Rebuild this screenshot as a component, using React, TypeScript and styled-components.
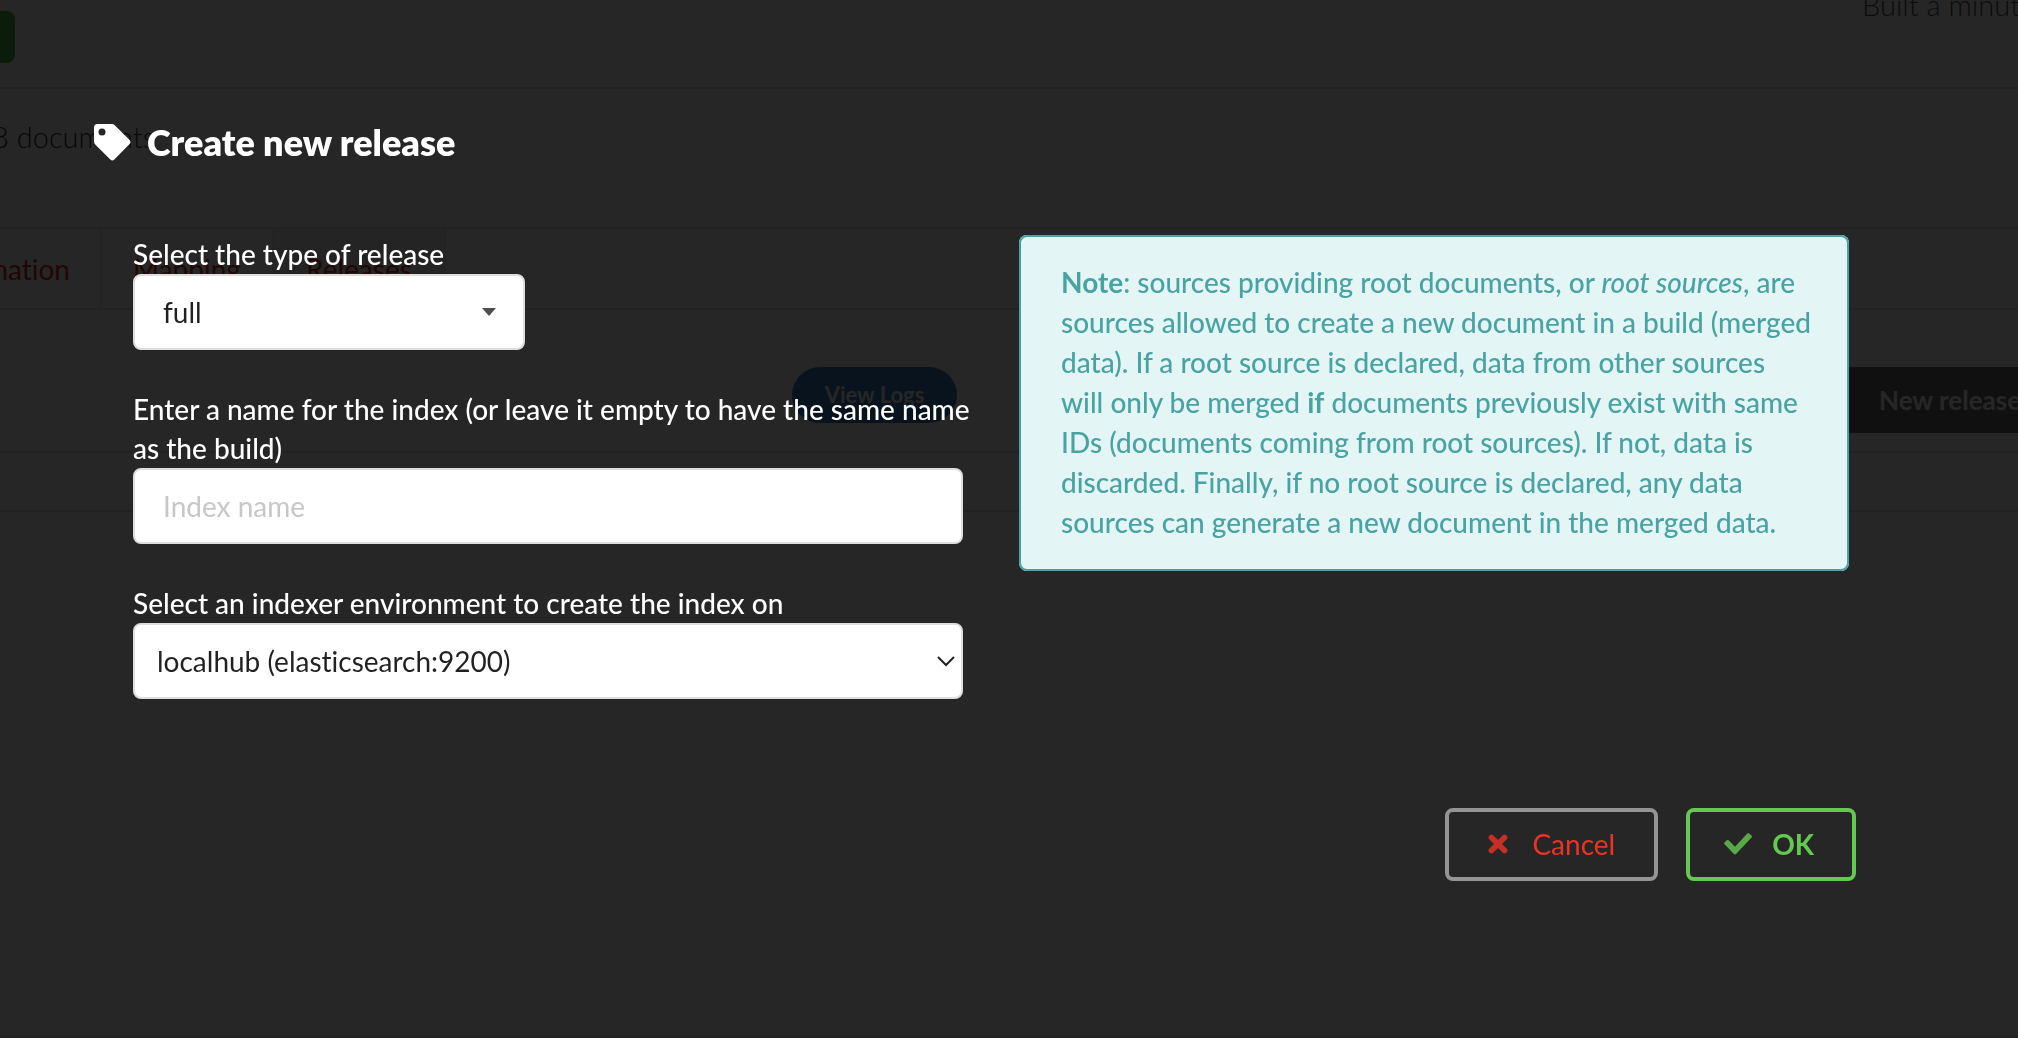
import React from 'react';
import styled, { createGlobalStyle, css } from 'styled-components';

const Global = createGlobalStyle`
  *, *::before, *::after { box-sizing: border-box; }
  html, body { margin: 0; background: #fff; }
  body {
    overflow: hidden;
    font-family: Lato, "Open Sans", sans-serif;
    font-size: 28px;
    line-height: 40px;
    font-variant-ligatures: none;
    color: rgba(0, 0, 0, 0.87);
  }
  button, input, select { font: inherit; font-variant-ligatures: none; }
`;

/* ---------- build page, seen through the dimmer ---------- */

const Page = styled.div`
  display: flex;
  flex-direction: column;
  min-height: 100vh;
  overflow: hidden;
`;

const BuildBar = styled.header`
  display: flex;
  justify-content: space-between;
  align-items: flex-start;
  height: 89px;
  border-bottom: 2px solid #e3e3e3;
`;

const StatusBlock = styled.span`
  width: 15px;
  height: 52px;
  margin-top: 11px;
  background: #4fb948;
  border-radius: 0 8px 8px 0;
`;

const BuiltAt = styled.span`
  width: 156px;
  margin-top: -15px;
  font-weight: 300;
  font-size: 29px;
  color: #555;
  white-space: nowrap;
`;

const Summary = styled.section`
  display: flex;
  height: 138px;
  padding-top: 28px;
`;

const DocCount = styled.p`
  width: 155px;
  margin: 0;
  display: flex;
  justify-content: flex-end;
  font-weight: 300;
  font-size: 29px;
  white-space: nowrap;
  color: #333;
`;

const Tabs = styled.nav`
  display: flex;
  height: 83px;
  border: solid #e3e3e3;
  border-width: 2px 0;
`;

const Tab = styled.a<{ $active?: boolean; $cut?: boolean }>`
  display: flex;
  align-items: center;
  justify-content: ${(p) => (p.$cut ? 'flex-end' : 'center')};
  width: ${(p) => (p.$cut ? 102 : 172)}px;
  padding-right: ${(p) => (p.$cut ? 30 : 0)}px;
  border-right: 2px solid #e9e9e9;
  background: ${(p) => (p.$active ? '#f2f2f2' : 'transparent')};
  color: #db2828;
  text-decoration: none;
`;

const ReleaseRow = styled.section`
  display: flex;
  align-items: flex-start;
  height: 143px;
  padding-top: 57px;
  padding-left: 792px;
  border-bottom: 2px solid #e3e3e3;
`;

const LogsButton = styled.button`
  height: 56px;
  width: 165px;
  flex: none;
  padding: 0;
  border: 0;
  border-radius: 28px;
  background: #3580c0;
  color: #fff;
  font-size: 22px;
  font-weight: 700;
`;

const NewRelease = styled.button`
  height: 66px;
  width: 200px;
  flex: none;
  margin-left: auto;
  margin-right: -30px;
  padding: 0 0 0 31px;
  border: 0;
  background: #6b6b6b;
  color: #fff;
  font-weight: 700;
  font-size: 26px;
  text-align: left;
  white-space: nowrap;
`;

const EmptyRow = styled.div`
  height: 59px;
  border-bottom: 2px solid #e3e3e3;
`;

const FooterEdge = styled.footer`
  height: 2px;
  margin-top: auto;
  background: #f0c8e4;
`;

/* ---------- dialog ---------- */

const Dimmer = styled.div`
  position: fixed;
  inset: 0;
  overflow: auto;
  background: rgba(0, 0, 0, 0.85);
`;

const Dialog = styled.form`
  color: #fff;
  padding: 119px 162px 0 94px;
`;

const Title = styled.h2`
  display: flex;
  align-items: center;
  gap: 16px;
  margin: 0;
  font-size: 36px;
  line-height: 46px;
  font-weight: 800;
`;

const Columns = styled.div`
  display: grid;
  grid-template-columns: repeat(2, minmax(0, 1fr));
  align-items: start;
  gap: 56px;
  margin: 70px 7px 0 39px;
`;

const Fields = styled.div`
  display: flex;
  flex-direction: column;
  gap: 40px;
`;

const Field = styled.div`
  display: flex;
  flex-direction: column;
  align-items: flex-start;
`;

const Label = styled.label`
  line-height: 39px;
  font-weight: 500;
  white-space: nowrap;
`;

const boxed = css`
  height: 76px;
  border: 2px solid #dedede;
  border-radius: 8px;
  background: #fff;
  color: rgba(0, 0, 0, 0.87);
  outline: none;
`;

const TextInput = styled.input`
  ${boxed}
  width: 100%;
  padding: 0 28px;
  &::placeholder {
    color: #c7c7c7;
    opacity: 1;
  }
`;

const SelectWrap = styled.div<{ $fit?: boolean }>`
  display: grid;
  align-items: center;
  width: ${(p) => (p.$fit ? '392px' : '100%')};
  & > * {
    grid-area: 1 / 1;
  }
  & > svg {
    justify-self: end;
    margin-right: ${(p) => (p.$fit ? 29 : 8)}px;
    pointer-events: none;
  }
`;

const Select = styled.select<{ $indent: number }>`
  ${boxed}
  width: 100%;
  padding: 0 0 0 ${(p) => p.$indent}px;
  appearance: none;
`;

const Note = styled.aside`
  padding: 27px 24px 29px 42px;
  border-radius: 8px;
  background: #e3f5f5;
  box-shadow: inset 0 0 0 2px #4aa3a3;
  color: #4aa3a3;
  font-weight: 500;
`;

const Actions = styled.div`
  display: flex;
  justify-content: flex-end;
  gap: 28px;
  margin-top: 109px;
`;

const Action = styled.button<{ $tone: 'cancel' | 'ok' }>`
  display: flex;
  align-items: center;
  height: 73px;
  padding: 0 ${(p) => (p.$tone === 'ok' ? 38 : 39)}px 2px ${(p) => (p.$tone === 'ok' ? 34 : 39)}px;
  gap: ${(p) => (p.$tone === 'ok' ? 20 : 24)}px;
  border: 4px solid ${(p) => (p.$tone === 'ok' ? '#64c951' : '#949494')};
  border-radius: 8px;
  background: transparent;
  color: ${(p) => (p.$tone === 'ok' ? '#64c951' : '#ec3323')};
  font-weight: ${(p) => (p.$tone === 'ok' ? 700 : 400)};
  line-height: 28px;
  & > svg {
    opacity: 0.8;
  }
`;

const TagIcon = () => (
  <svg width="37" height="37" viewBox="0 0 37 37" aria-hidden="true">
    <path
      fill="#fff"
      fillRule="evenodd"
      d="M3.500 0H17.500Q19.500 0 21 1.400L35.600 16Q37.400 18 35.600 20L20.300 35.600Q18.300 37.400 16.300 35.600L1.500 20.700Q0 19.200 0 17.200V3.500Q0 0 3.500 0ZM8 4.600A3.500 3.500 0 1 0 8 11.600A3.500 3.500 0 1 0 8 4.600Z"
    />
  </svg>
);

const CrossIcon = () => (
  <svg width="20" height="20" viewBox="0 0 20 20" aria-hidden="true">
    <path
      d="M3.400 3.400L16.600 16.600M16.600 3.400L3.400 16.600"
      stroke="currentColor"
      strokeWidth="5.600"
      strokeLinecap="round"
    />
  </svg>
);

const CheckIcon = () => (
  <svg width="28" height="22" viewBox="0 0 28 22" aria-hidden="true">
    <path
      fill="currentColor"
      d="M27.600 4.500L12.300 20.800Q11 22 9.700 20.800L0.500 11.300Q-0.300 10.300 0.500 9.500L2.700 7.300Q3.700 6.500 4.700 7.300L11 13.700L23.300 0.600Q24.300 -0.200 25.300 0.600L27.600 2.700Q28.300 3.600 27.600 4.500Z"
    />
  </svg>
);

const App: React.FC = () => (
  <>
    <Global />
    <Page>
      <BuildBar>
        <StatusBlock />
        <BuiltAt>Built a minute ago</BuiltAt>
      </BuildBar>
      <Summary>
        <DocCount>8 documents</DocCount>
      </Summary>
      <Tabs>
        <Tab $cut href="#information">Information</Tab>
        <Tab href="#mapping">Mapping</Tab>
        <Tab $active href="#releases">Releases</Tab>
      </Tabs>
      <ReleaseRow>
        <LogsButton type="button">View Logs</LogsButton>
        <NewRelease type="button">New release</NewRelease>
      </ReleaseRow>
      <EmptyRow />
      <FooterEdge />
    </Page>
    <Dimmer>
      <Dialog role="dialog" aria-labelledby="dialog-title" onSubmit={(e) => e.preventDefault()}>
        <Title id="dialog-title">
          <TagIcon />
          Create new release
        </Title>
        <Columns>
          <Fields>
            <Field>
              <Label htmlFor="release-type">Select the type of release</Label>
              <SelectWrap $fit>
                <Select id="release-type" $indent={28} defaultValue="full">
                  <option value="full">full</option>
                  <option value="incremental">incremental</option>
                </Select>
                <svg width="14" height="8" viewBox="0 0 14 8" aria-hidden="true">
                  <path d="M0 0H14L7 8Z" fill="#4d4d4d" />
                </svg>
              </SelectWrap>
            </Field>
            <Field>
              <Label htmlFor="index-name">
                Enter a name for the index (or leave it empty to have the same name
                <br />
                as the build)
              </Label>
              <TextInput id="index-name" type="text" placeholder="Index name" />
            </Field>
            <Field>
              <Label htmlFor="indexer-env">Select an indexer environment to create the index on</Label>
              <SelectWrap>
                <Select id="indexer-env" $indent={22} defaultValue="localhub">
                  <option value="localhub">localhub (elasticsearch:9200)</option>
                </Select>
                <svg width="18" height="11" viewBox="0 0 18 11" aria-hidden="true">
                  <path d="M1 1L9 9L17 1" fill="none" stroke="#222" strokeWidth="2" />
                </svg>
              </SelectWrap>
            </Field>
          </Fields>
          <Note>
            <b>Note</b>: sources providing root documents, or <i>root sources</i>, are
            <br />
            sources allowed to create a new document in a build (merged
            <br />
            data). If a root source is declared, data from other sources
            <br />
            will only be merged <b>if</b> documents previously exist with same
            <br />
            IDs (documents coming from root sources). If not, data is
            <br />
            discarded. Finally, if no root source is declared, any data
            <br />
            sources can generate a new document in the merged data.
          </Note>
        </Columns>
        <Actions>
          <Action type="button" $tone="cancel">
            <CrossIcon />
            Cancel
          </Action>
          <Action type="submit" $tone="ok">
            <CheckIcon />
            OK
          </Action>
        </Actions>
      </Dialog>
    </Dimmer>
  </>
);

export default App;
